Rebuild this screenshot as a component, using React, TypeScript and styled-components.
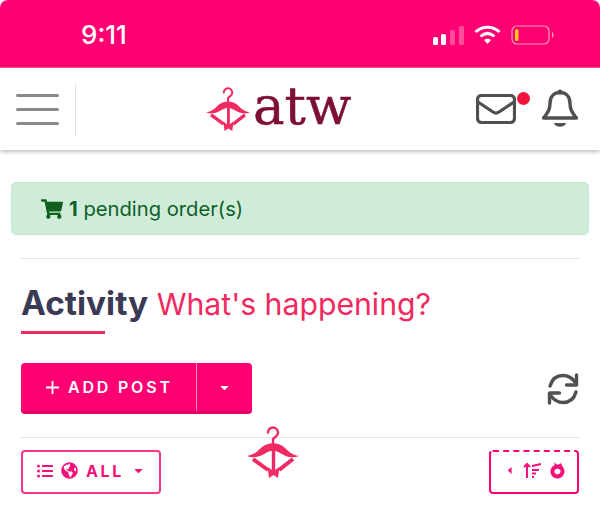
import React from "react";
import styled, { createGlobalStyle } from "styled-components";
import { FaShoppingCart, FaListUl, FaGlobeAmericas, FaCaretDown, FaCaretLeft } from "react-icons/fa";

const pink = "#ff0073";

const GlobalStyle = createGlobalStyle`
  html, body {
    margin: 0;
    background: #fff;
    font-family: Inter, "Liberation Sans", sans-serif;
    overflow: hidden;
  }
`;

const Page = styled.div`
  position: relative;
  width: 600px;
  height: 507px;
  overflow: hidden;
`;

const StatusBar = styled.div`
  height: 68px;
  box-sizing: border-box;
  background: ${pink};
  border-radius: 8px 8px 0 0;
  border-bottom: 1px solid #ff4d8e;
  display: flex;
  align-items: center;
  justify-content: space-between;
  padding: 3px 45px 0 81px;
  color: #fff;
`;

const Time = styled.span`
  font-size: 26px;
  font-weight: 500;
  line-height: 1;
`;

const StatusIcons = styled.div`
  display: flex;
  align-items: center;
  gap: 10px;
`;

const Header = styled.header`
  height: 82px;
  background: #fff;
  box-shadow: 0 2px 4px rgba(0, 0, 0, 0.25);
  display: flex;
  align-items: center;
  position: relative;
`;

const MenuBox = styled.div`
  width: 76px;
  height: 52px;
  box-sizing: border-box;
  border-right: 1px solid #e2e2e2;
  padding-left: 16px;
  display: flex;
  flex-direction: column;
  justify-content: center;
  gap: 11px;
`;

const MenuLine = styled.span`
  width: 43px;
  height: 3px;
  border-radius: 2px;
  background: #8a8a8a;
`;

const Brand = styled.div`
  margin-left: 130px;
  width: 264px;
  display: flex;
  align-items: center;
  gap: 3px;
`;

const BrandName = styled.span`
  font-family: "DejaVu Serif", serif;
  font-size: 53px;
  line-height: 1;
  color: #7c0f33;
  margin-top: -8px;
  -webkit-text-stroke: 0.5px #7c0f33;
`;

const HeaderActions = styled.div`
  display: flex;
  align-items: center;
  margin-left: 6px;
  gap: 26px;
`;

const MailWrap = styled.div`
  position: relative;
  width: 40px;
  height: 30px;
`;

const Dot = styled.span`
  position: absolute;
  left: 41px;
  top: -2px;
  width: 13px;
  height: 13px;
  border-radius: 50%;
  background: #f0143c;
`;

const Content = styled.main`
  padding: 32px 11px 0;
`;

const Alert = styled.div`
  height: 53px;
  box-sizing: border-box;
  background: #cfecd9;
  border: 1px solid #c2e6ce;
  border-radius: 5px;
  color: #0f5f2a;
  display: flex;
  align-items: center;
  padding-left: 29px;
  font-size: 20.2px;
  gap: 6px;
`;

const Section = styled.section`
  margin: 23px 10px 0;
  border-top: 1px solid #e4e4e4;
`;

const TitleRow = styled.h1`
  margin: 26px 0 0;
  font-size: 30.2px;
  line-height: 36px;
  font-weight: 400;
  color: #f0295f;
`;

const TitleStrong = styled.strong`
  font-size: 33.4px;
  font-weight: 700;
  color: #3a3a55;
`;

const TitleRule = styled.div`
  width: 84px;
  height: 3px;
  margin-top: 9px;
  background: #f0295f;
`;

const ActionRow = styled.div`
  display: flex;
  align-items: center;
  justify-content: space-between;
  margin-top: 29px;
  padding-bottom: 23px;
  border-bottom: 1px solid #e4e4e4;
`;

const SplitButton = styled.div`
  display: flex;
  width: 231px;
  height: 51px;
  box-sizing: border-box;
  border-radius: 4px;
  background: ${pink};
  border-bottom: 3px solid #e00062;
  color: #fff;
`;

const AddPost = styled.div`
  width: 176px;
  box-sizing: border-box;
  border-right: 1px solid #ff8fbb;
  display: flex;
  align-items: center;
  padding-left: 24px;
  gap: 8px;
  font-size: 16px;
  font-weight: 600;
  letter-spacing: 2.8px;
`;

const CaretBox = styled.div`
  flex: 1;
  display: flex;
  align-items: center;
  justify-content: center;
  font-size: 13px;
`;

const FilterRow = styled.div`
  display: flex;
  justify-content: space-between;
  margin-top: 12px;
`;

const FilterButton = styled.div<{ $width: number; $faded?: boolean }>`
  width: ${(p) => p.$width}px;
  height: 44px;
  box-sizing: border-box;
  border: 2px solid ${(p) => (p.$faded ? pink : "#f5348c")};
  border-top-style: ${(p) => (p.$faded ? "dashed" : "solid")};
  border-radius: 4px;
  color: #f5107a;
  display: flex;
  align-items: center;
  justify-content: center;
  padding-bottom: 3px;
  font-size: 16px;
  font-weight: 700;
  letter-spacing: 2.6px;
  gap: 8px;
`;

const FloatingHanger = styled.div`
  position: absolute;
  left: 247px;
  top: 426px;
`;

function Hanger({ size, color = "#f02a63" }: { size: number; color?: string }) {
  return (
    <svg width={size} height={size} viewBox="0 0 52 52" fill="none">
      <path d="M21 6.500a5 5 0 1 1 8 4l-3 2.500v6" stroke={color} strokeWidth="2.400" strokeLinecap="round" />
      <path
        d="M0 30c7-1 11-5 15-9 7-5 15-5 22 0 4 4 8 8 15 9-8 3-14 0-19-3-5-3-9-3-14 0-5 3-11 6-19 3z"
        fill={color}
      />
      <path d="M24.800 18h3.400v27h-3.400z" fill={color} />
      <path d="M6 33l15 11M46 33L32 44" stroke={color} strokeWidth="4" />
      <path d="M20.500 41l6 4 6-4-1.500 11-4.500-3-4.500 3z" fill={color} />
    </svg>
  );
}

function SignalIcon() {
  return (
    <svg width="31" height="30" viewBox="0 0 31 30">
      <rect x="0" y="17" width="5" height="8" rx="1.500" fill="#fff" />
      <rect x="8" y="14" width="5" height="11" rx="1.500" fill="#fff" />
      <rect x="17" y="10" width="5" height="15" rx="1.500" fill="#ff4d9c" />
      <rect x="26" y="6" width="5" height="19" rx="1.500" fill="#ff4d9c" />
    </svg>
  );
}

function WifiIcon() {
  return (
    <svg width="27" height="20" viewBox="0 0 27 20" fill="none" stroke="#fff" strokeWidth="3">
      <path d="M1.500 7c7-6.500 17-6.500 24 0" />
      <path d="M6.500 11.500c4.500-4 9.500-4 14 0" />
      <path d="M13.500 19l-3.500-4c2-1.600 5-1.600 7 0z" fill="#fff" stroke="none" />
    </svg>
  );
}

function BatteryIcon() {
  return (
    <svg width="44" height="20" viewBox="0 0 44 20">
      <rect x="1" y="1" width="37" height="18" rx="5" fill="none" stroke="#ff9cc4" strokeWidth="1.200" />
      <rect x="4" y="4" width="3.500" height="12" rx="1.500" fill="#ffc61a" />
      <path d="M41 7c2 .8 2 5.200 0 6z" fill="#ff9cc4" />
    </svg>
  );
}

function MailIcon() {
  return (
    <svg width="40" height="30" viewBox="0 0 40 30" fill="none" stroke="#505050" strokeWidth="3.200" strokeLinejoin="round">
      <rect x="1.500" y="1.500" width="37" height="27" rx="4" />
      <path d="M2 8l15 10c2 1.400 4 1.400 6 0L38 8" />
    </svg>
  );
}

function BellIcon() {
  return (
    <svg width="36" height="40" viewBox="0 0 36 40" fill="none">
      <circle cx="18" cy="3" r="2.500" fill="#505050" />
      <path
        d="M18 3.500c-7 0-10 5-10 11 0 7-3 10-6.500 14.500h33c-3.500-4.500-6.500-7.500-6.500-14.500 0-6-3-11-10-11z"
        stroke="#505050"
        strokeWidth="3.400"
        strokeLinejoin="round"
      />
      <path d="M12 34h12c-1 5-11 5-12 0z" fill="#505050" />
    </svg>
  );
}

function RefreshIcon() {
  return (
    <svg width="32" height="32" viewBox="0 0 32 32" fill="none" stroke="#505050" strokeWidth="3.400" strokeLinecap="round">
      <path d="M3 13C5 6 10 2.500 16 2.500c5 0 9 2.500 12 6.500" />
      <path d="M29.500 2v10h-10" strokeLinejoin="round" />
      <path d="M29 19c-2 7-7 10.500-13 10.500-5 0-9-2.500-12-6.500" />
      <path d="M2.500 30V20h10" strokeLinejoin="round" />
    </svg>
  );
}

function SortIcon() {
  return (
    <svg width="19" height="17" viewBox="0 0 19 17" fill="none" stroke="#f5107a" strokeWidth="2">
      <path d="M4 16V2M1 5l3-3 3 3" />
      <path d="M9 4l9-2M9 8h7M9 11.500h4M9 15h2" strokeWidth="1.800" />
    </svg>
  );
}

function FireIcon() {
  return (
    <svg width="15" height="17" viewBox="0 0 15 17" fill="none">
      <path d="M7.500 4.500a5 5 0 1 1-.1 0z" stroke="#f5107a" strokeWidth="4" />
      <path d="M4 0l3.500 3.500L11 1l1.500 4-7 2z" fill="#f5107a" />
    </svg>
  );
}

export default function App() {
  return (
    <Page>
      <GlobalStyle />
      <StatusBar>
        <Time>9:11</Time>
        <StatusIcons>
          <SignalIcon />
          <WifiIcon />
          <BatteryIcon />
        </StatusIcons>
      </StatusBar>
      <Header>
        <MenuBox>
          <MenuLine />
          <MenuLine />
          <MenuLine />
        </MenuBox>
        <Brand>
          <Hanger size={44} />
          <BrandName>atw</BrandName>
        </Brand>
        <HeaderActions>
          <MailWrap>
            <MailIcon />
            <Dot />
          </MailWrap>
          <BellIcon />
        </HeaderActions>
      </Header>
      <Content>
        <Alert>
          <FaShoppingCart size={22} color="#0f5f1f" />
          <span>
            <b>1</b> pending order(s)
          </span>
        </Alert>
        <Section>
          <TitleRow>
            <TitleStrong>Activity</TitleStrong> What's happening?
          </TitleRow>
          <TitleRule />
          <ActionRow>
            <SplitButton>
              <AddPost>
                <svg width="15" height="15" viewBox="0 0 15 15" stroke="#fff" strokeWidth="1.800">
                  <path d="M7.500 1v13M1 7.500h13" />
                </svg>
                ADD POST
              </AddPost>
              <CaretBox>
                <FaCaretDown />
              </CaretBox>
            </SplitButton>
            <RefreshIcon />
          </ActionRow>
          <FilterRow>
            <FilterButton $width={140}>
              <FaListUl size={16} />
              <FaGlobeAmericas size={17} />
              ALL
              <FaCaretDown size={13} />
            </FilterButton>
            <FilterButton $width={90} $faded>
              <FaCaretLeft size={11} />
              <SortIcon />
              <FireIcon />
            </FilterButton>
          </FilterRow>
        </Section>
      </Content>
      <FloatingHanger>
        <Hanger size={52} />
      </FloatingHanger>
    </Page>
  );
}
